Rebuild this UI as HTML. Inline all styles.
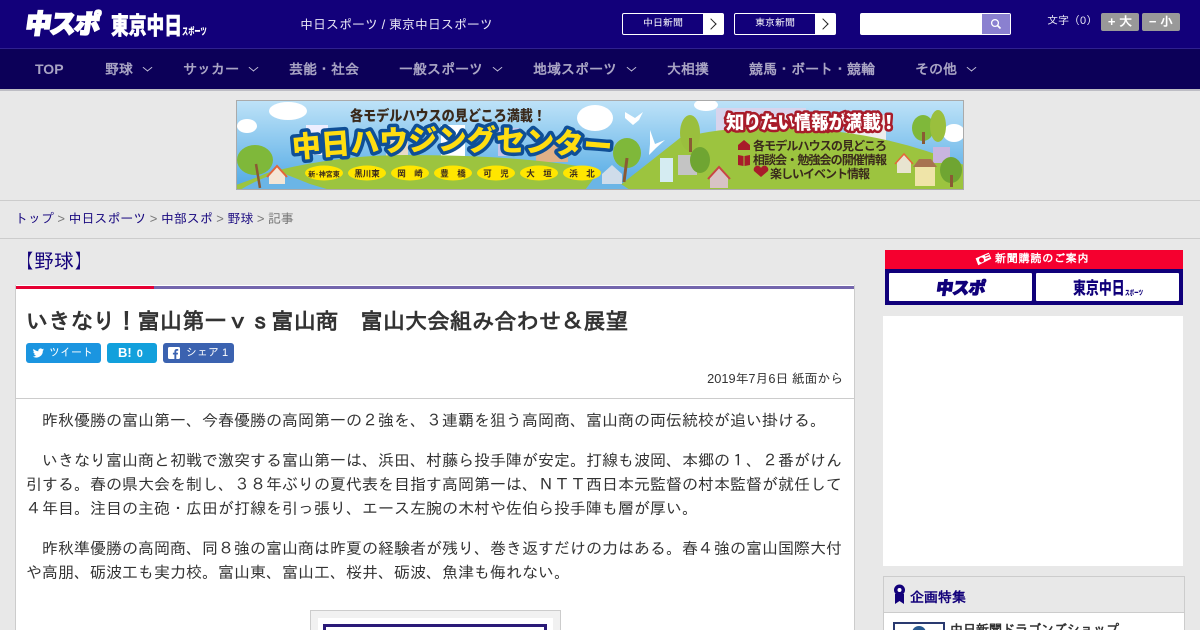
<!DOCTYPE html>
<html lang="ja"><head><meta charset="utf-8"><title>いきなり！富山第一ｖｓ富山商</title>
<style>
*{box-sizing:border-box;margin:0;padding:0}
html,body{width:1200px;height:630px;overflow:hidden;background:#e8e8e8}
body{position:relative;font-family:"Liberation Sans","IPAGothic",sans-serif;color:#333}
.a{position:absolute;white-space:nowrap}
.nav{font-size:14px;font-weight:bold;color:#a9a4c4;top:59px;line-height:20px}
.chev{position:absolute;top:64px;width:7px;height:7px;border-right:1px solid #c5c1da;border-bottom:1px solid #c5c1da;transform:scaleY(.8) rotate(45deg)}
.nb{top:13px;height:22px;border:1px solid #fff;border-radius:2px;background:#12007a;color:#fff;font-size:10px;line-height:20px;text-align:center}
.nb i{position:absolute;right:0;top:0;width:20px;height:20px;background:#fff}
.nb i:after{content:"";position:absolute;left:4px;top:6px;width:7px;height:7px;border-top:1px solid #222;border-right:1px solid #222;transform:rotate(45deg)}
.sz{top:13px;height:18px;background:#999;border-radius:2px;color:#fff;font-weight:bold;font-size:13px;line-height:18px;text-align:center}
.p{position:absolute;left:26px;width:816px;font-size:16px;line-height:24px;color:#333;white-space:nowrap}
.sh{top:343px;height:20px;border-radius:3px;color:#fff;font-size:11px;line-height:20px}
.bc{font-size:13px;letter-spacing:-.05px;color:#777;top:209px;left:15px;line-height:20px}
.bc b{font-weight:normal;color:#1a0a80}
.lg{transform-origin:0 0}
</style></head><body>

<!-- header -->
<div class="a" style="left:0;top:0;width:1200px;height:48px;background:#12007a"></div>
<div class="a" style="left:0;top:48px;width:1200px;height:41px;background:#0c0058;border-top:1px solid #2f2190"></div>
<div class="a" style="left:0;top:89px;width:1200px;height:2px;background:#bdbdc4"></div>

<div class="a lg" style="left:25px;top:7px;font-size:26px;line-height:32px;font-weight:900;color:#fff;transform:skewX(-8deg) translateX(3px);letter-spacing:-1.500px;-webkit-text-stroke:1.800px #fff;font-family:'Noto Sans CJK JP',sans-serif">中スポ</div>
<div class="a lg" style="left:111px;top:9px;font-size:24px;line-height:30px;font-weight:900;color:#fff;transform:scaleX(.74);-webkit-text-stroke:.5px #fff;font-family:'Noto Sans CJK JP',sans-serif">東京中日</div>
<div class="a lg" style="left:182px;top:24px;font-size:10px;line-height:14px;font-weight:900;color:#fff;transform:scaleX(.62);font-family:'Noto Sans CJK JP',sans-serif">スポーツ</div>

<div class="a" style="left:300px;top:15px;font-size:13px;line-height:20px;color:#e8e6f5">中日スポーツ / 東京中日スポーツ</div>

<div class="a nb" style="left:622px;width:102px;padding-right:20px">中日新聞<i></i></div>
<div class="a nb" style="left:734px;width:102px;padding-right:20px">東京新聞<i></i></div>

<div class="a" style="left:860px;top:13px;width:151px;height:22px;background:#fff;border-radius:2px"></div>
<div class="a" style="left:982px;top:14px;width:28px;height:20px;background:#8a80d0"></div>
<svg class="a" style="left:990px;top:18px" width="12" height="12" viewBox="0 0 12 12"><circle cx="5" cy="5" r="3.400" fill="none" stroke="#fff" stroke-width="1.300"/><path d="M7.500 7.500L10.500 10.500" stroke="#fff" stroke-width="1.600"/></svg>

<div class="a" style="left:1047px;top:12px;font-size:11px;line-height:18px;color:#e8e6f5">文字（0）</div>
<div class="a sz" style="left:1101px;width:38px">+ 大</div>
<div class="a sz" style="left:1142px;width:38px">− 小</div>

<!-- nav -->
<div class="a nav" style="left:35px">TOP</div>
<div class="a nav" style="left:105px">野球</div><span class="chev" style="left:144px"></span>
<div class="a nav" style="left:183px">サッカー</div><span class="chev" style="left:250px"></span>
<div class="a nav" style="left:289px">芸能・社会</div>
<div class="a nav" style="left:399px">一般スポーツ</div><span class="chev" style="left:494px"></span>
<div class="a nav" style="left:533px">地域スポーツ</div><span class="chev" style="left:628px"></span>
<div class="a nav" style="left:667px">大相撲</div>
<div class="a nav" style="left:749px">競馬・ボート・競輪</div>
<div class="a nav" style="left:915px">その他</div><span class="chev" style="left:968px"></span>

<!-- banner -->
<svg class="a" style="left:236px;top:100px" width="728" height="90" viewBox="0 0 728 90" font-family="Noto Sans CJK JP,sans-serif">
<defs><linearGradient id="sky" x1="0" y1="0" x2="0" y2="1"><stop offset="0" stop-color="#bfe3f8"/><stop offset="1" stop-color="#4fa8e4"/></linearGradient>
<path id="arc" d="M57 58Q215 42 385 58"/></defs>
<rect width="728" height="90" fill="url(#sky)"/>
<g fill="#fff"><ellipse cx="52" cy="11" rx="19" ry="9"/><ellipse cx="11" cy="26" rx="10" ry="7"/><ellipse cx="359" cy="18" rx="18" ry="13"/><ellipse cx="470" cy="5" rx="12" ry="6"/><ellipse cx="718" cy="33" rx="11" ry="9"/></g>
<g fill="#fff"><path d="M389 12l10 6 8-6-4 8-6 5-8-7z"/><path d="M414 30l5 14 10-4-9 8-7 7 1-11z"/></g>
<g><rect x="70" y="25" width="22" height="30" fill="#eef"/><rect x="150" y="40" width="22" height="22" fill="#e9dbc8"/><rect x="205" y="25" width="24" height="35" fill="#fff"/><rect x="262" y="28" width="22" height="28" fill="#c9c5ea"/><rect x="300" y="40" width="32" height="22" fill="#e0b088"/><rect x="480" y="8" width="90" height="26" fill="#d8d4ec"/><rect x="540" y="14" width="32" height="18" fill="#eaf0f5"/><rect x="610" y="15" width="40" height="26" fill="#eee"/></g>
<path d="M0 90V85Q20 78 31 73Q100 55 170 55Q290 55 364 70L395 90Z" fill="#9cc43f"/>
<path d="M378 90L444 38Q490 26 540 28Q640 28 728 65V90Z" fill="#9cc43f"/>
<path d="M4 90Q20 80 44 72l30 12 20 6z" fill="#6bb5e6"/>
<path d="M364 70l30 20h-45z" fill="#6bb5e6"/>
<ellipse cx="19" cy="60" rx="18" ry="15" fill="#7fb83a"/><path d="M24 88l-4-24" stroke="#8a5a34" stroke-width="2.500"/>
<path d="M33 75l8-9 8 9v9H33z" fill="#f4e6d6"/><path d="M31 77l10-11 10 11" fill="none" stroke="#e5653a" stroke-width="2"/>
<ellipse cx="391" cy="53" rx="14" ry="15" fill="#7fb83a"/><path d="M388 82l3-24" stroke="#8a5a34" stroke-width="3"/>
<path d="M366 74l10-9 10 9v10h-20z" fill="#cfdcea"/>
<rect x="424" y="58" width="13" height="24" fill="#d5ecf2"/><rect x="442" y="55" width="19" height="20" fill="#c4c4c4"/><ellipse cx="464" cy="60" rx="10" ry="13" fill="#6fa532"/>
<path d="M474 78l9-10 9 10v10h-18z" fill="#d8c3c5"/><path d="M472 79l11-12 11 12" fill="none" stroke="#c94545" stroke-width="2"/>
<rect x="697" y="47" width="17" height="16" fill="#c9b5e0"/><rect x="679" y="66" width="20" height="20" fill="#efe4a8"/><path d="M677 67l6-8h12l6 8z" fill="#a87450"/>
<path d="M661 62l7-8 7 8v11h-14z" fill="#e8e4d0"/><path d="M659 64l9-10 9 10" fill="none" stroke="#e5653a" stroke-width="1.500"/>
<ellipse cx="715" cy="70" rx="11" ry="13" fill="#6fa532"/><rect x="714" y="75" width="3" height="12" fill="#8a5a34"/>
<ellipse cx="687" cy="28" rx="11" ry="13" fill="#7fb83a"/><ellipse cx="702" cy="26" rx="8" ry="16" fill="#9abf3d"/><rect x="686" y="32" width="3" height="12" fill="#8a5a34"/>
<ellipse cx="454" cy="33" rx="10" ry="18" fill="#9abf3d"/><rect x="453" y="38" width="3" height="14" fill="#8a5a34"/>
<text x="114" y="21" font-size="14.500" font-weight="900" fill="#3a2a1c" textLength="196" lengthAdjust="spacingAndGlyphs">各モデルハウスの見どころ満載！</text>
<text font-size="29" font-weight="900" fill="#ffdd11" stroke="#0f4f96" stroke-width="7" paint-order="stroke" stroke-linejoin="round"><textPath href="#arc">中日ハウジングセンター</textPath></text>
<g fill="#ffe600"><ellipse cx="88" cy="73" rx="19" ry="7.500"/><ellipse cx="131" cy="73" rx="19" ry="7.500"/><ellipse cx="174" cy="73" rx="19" ry="7.500"/><ellipse cx="217" cy="73" rx="19" ry="7.500"/><ellipse cx="260" cy="73" rx="19" ry="7.500"/><ellipse cx="303" cy="73" rx="19" ry="7.500"/><ellipse cx="346" cy="73" rx="19" ry="7.500"/></g>
<g font-size="8.500" font-weight="bold" fill="#3a2a1c" text-anchor="middle"><text x="88" y="76.500" font-size="7">新･神宮東</text><text x="131" y="76.500">黒川東</text><text x="174" y="76.500">岡　崎</text><text x="217" y="76.500">豊　橋</text><text x="260" y="76.500">可　児</text><text x="303" y="76.500">大　垣</text><text x="346" y="76.500">浜　北</text></g>
<text x="490" y="29" font-size="18.500" font-weight="900" fill="#fff" stroke="#a81c2a" stroke-width="5" paint-order="stroke" stroke-linejoin="round" textLength="172">知りたい情報が満載！</text>
<g font-size="12" font-weight="bold" fill="#3a2a1c"><text x="517" y="50" textLength="134">各モデルハウスの見どころ</text><text x="517" y="64" textLength="134">相談会・勉強会の開催情報</text><text x="534" y="78" textLength="100">楽しいイベント情報</text></g>
<g fill="#a81c2a"><path d="M502 45l6-5 6 5v5h-12z"/><path d="M502 55l5.500 1v10l-5.500-1zM514 55l-5.500 1v10l5.500-1z"/><path d="M526 78l-7-6a3.500 3.500 0 0 1 7-3 3.500 3.500 0 0 1 7 3z" transform="translate(-1 -1)"/></g>
<rect x=".5" y=".5" width="727" height="89" fill="none" stroke="#aaa"/>
</svg>

<!-- breadcrumb -->
<div class="a" style="left:0;top:200px;width:1200px;height:39px;border-top:1px solid #ccc;border-bottom:1px solid #ccc"></div>
<div class="a bc"><b>トップ</b> &gt; <b>中日スポーツ</b> &gt; <b>中部スポ</b> &gt; <b>野球</b> &gt; 記事</div>

<div class="a" style="left:14px;top:248px;font-size:20px;line-height:28px;color:#12007a">【野球】</div>

<!-- article -->
<div class="a" style="left:15px;top:285px;width:840px;height:345px;background:#fff;border-left:1px solid #ccc;border-right:1px solid #ccc"></div>
<div class="a" style="left:16px;top:286px;width:838px;height:3px;background:#7466ad"></div>
<div class="a" style="left:16px;top:286px;width:138px;height:3px;background:#e60033"></div>
<div class="a" style="left:26px;top:306px;font-size:22.300px;line-height:32px;font-weight:bold;color:#333">いきなり！富山第一ｖｓ富山商　富山大会組み合わせ＆展望</div>

<div class="a sh" style="left:26px;width:75px;background:#1b95e0;padding-left:23px">ツイート</div>
<svg class="a" style="left:32px;top:347px" width="13" height="12" viewBox="0 0 24 24"><path fill="#fff" d="M23 5c-.8.400-1.700.600-2.600.700 1-.600 1.700-1.500 2-2.500-.9.500-1.900.900-2.900 1.100a4.600 4.600 0 0 0-7.800 4.200C7.900 8.300 4.500 6.500 2.200 3.700a4.600 4.600 0 0 0 1.400 6.100c-.7 0-1.400-.2-2-.6 0 2.200 1.600 4.100 3.700 4.600-.7.200-1.400.2-2.100.1.600 1.800 2.300 3.100 4.300 3.200A9.300 9.300 0 0 1 .7 19a13 13 0 0 0 20-11.600c.9-.6 1.700-1.400 2.300-2.400z"/></svg>
<div class="a sh" style="left:107px;width:50px;background:#12a0dc;padding-left:11px"><b style="font-size:13px">B!</b> <b style="margin-left:2px;font-size:11px">0</b></div>
<div class="a sh" style="left:163px;width:71px;background:#3b62b0;padding-left:23px">シェア 1</div>
<svg class="a" style="left:168px;top:347px" width="12" height="12" viewBox="0 0 12 12"><rect width="12" height="12" rx="1.500" fill="#fff"/><path d="M8.300 12V7.500h1.500l.2-1.800H8.300V4.600c0-.5.200-.9.900-.9h1V2.100c-.4 0-.9-.1-1.400-.1C7.400 2 6.400 2.900 6.400 4.400v1.300H4.900v1.800h1.500V12z" fill="#3b62b0"/></svg>

<div class="a" style="right:357px;top:369px;font-size:12.800px;line-height:20px;color:#333">2019年7月6日 紙面から</div>
<div class="a" style="left:16px;top:398px;width:838px;height:1px;background:#ccc"></div>

<div class="p" style="top:410px">　昨秋優勝の富山第一、今春優勝の高岡第一の２強を、３連覇を狙う高岡商、富山商の両伝統校が追い掛ける。</div>
<div class="p" style="top:450px">　いきなり富山商と初戦で激突する富山第一は、浜田、村藤ら投手陣が安定。打線も波岡、本郷の１、２番がけん<br>引する。春の県大会を制し、３８年ぶりの夏代表を目指す高岡第一は、ＮＴＴ西日本元監督の村本監督が就任して<br>４年目。注目の主砲・広田が打線を引っ張り、エース左腕の木村や佐伯ら投手陣も層が厚い。</div>
<div class="p" style="top:538px">　昨秋準優勝の高岡商、同８強の富山商は昨夏の経験者が残り、巻き返すだけの力はある。春４強の富山国際大付<br>や高朋、砺波工も実力校。富山東、富山工、桜井、砺波、魚津も侮れない。</div>

<div class="a" style="left:310px;top:610px;width:251px;height:20px;background:#f1f1f1;border:1px solid #ccc;border-bottom:0"></div>
<div class="a" style="left:318px;top:618px;width:235px;height:12px;background:#fff"></div>
<div class="a" style="left:323px;top:624px;width:224px;height:6px;border:3px solid #2a1a78;border-bottom:0"></div>

<!-- sidebar -->
<div class="a" style="left:885px;top:250px;width:298px;height:55px;background:#10007a"></div>
<div class="a" style="left:885px;top:250px;width:298px;height:19px;background:#f5002f"></div>
<svg class="a" style="left:974px;top:251px" width="19" height="17" viewBox="0 0 19 17"><path d="M1 7l14-6 3 7-14 7z" fill="#fff" stroke="#f5002f"/><circle cx="7.500" cy="9" r="2.500" fill="#f5002f"/><path d="M11 5l4-1.500M11.500 7.500l4-1.500" stroke="#f5002f"/></svg>
<div class="a" style="left:995px;top:252px;font-size:11px;line-height:15px;font-weight:bold;color:#fff;letter-spacing:.8px">新聞購読のご案内</div>
<div class="a" style="left:889px;top:273px;width:143px;height:28px;background:#fff;border-radius:1px"></div>
<div class="a" style="left:1036px;top:273px;width:143px;height:28px;background:#fff;border-radius:1px"></div>
<div class="a lg" style="left:935px;top:276px;font-size:17px;line-height:22px;font-weight:900;color:#10007a;transform:skewX(-8deg) translateX(3px);letter-spacing:-.8px;-webkit-text-stroke:1px #10007a;font-family:'Noto Sans CJK JP',sans-serif">中スポ</div>
<div class="a lg" style="left:1073px;top:276px;font-size:17px;line-height:22px;font-weight:900;color:#10007a;transform:scaleX(.76);font-family:'Noto Sans CJK JP',sans-serif">東京中日</div>
<div class="a lg" style="left:1125px;top:288px;font-size:7px;line-height:10px;font-weight:900;color:#10007a;transform:scaleX(.65);font-family:'Noto Sans CJK JP',sans-serif">スポーツ</div>

<div class="a" style="left:883px;top:316px;width:300px;height:250px;background:#fff"></div>

<div class="a" style="left:883px;top:576px;width:302px;height:54px;background:#fff;border:1px solid #ccc;border-bottom:0"></div>
<div class="a" style="left:884px;top:577px;width:300px;height:36px;background:#e8e8e8;border-bottom:1px solid #ccc"></div>
<svg class="a" style="left:893px;top:584px" width="13" height="21" viewBox="0 0 13 21"><path d="M2 10v10l4.500-3 4.500 3V10z" fill="#12007a"/><circle cx="6.500" cy="6" r="5.500" fill="#12007a"/><circle cx="6.500" cy="6" r="2" fill="#fff"/></svg>
<div class="a" style="left:910px;top:587px;font-size:14px;line-height:20px;font-weight:bold;color:#12007a">企画特集</div>
<div class="a" style="left:893px;top:622px;width:52px;height:8px;border:2px solid #2a3a70;border-bottom:0;background:#fff"></div>
<div class="a" style="left:912px;top:626px;width:14px;height:14px;border-radius:7px;background:#2a5a90;clip-path:inset(0 0 10px 0)"></div>
<div class="a" style="left:950px;top:620px;font-size:13px;line-height:20px;font-weight:bold;color:#333">中日新聞ドラゴンズショップ</div>
</body></html>
